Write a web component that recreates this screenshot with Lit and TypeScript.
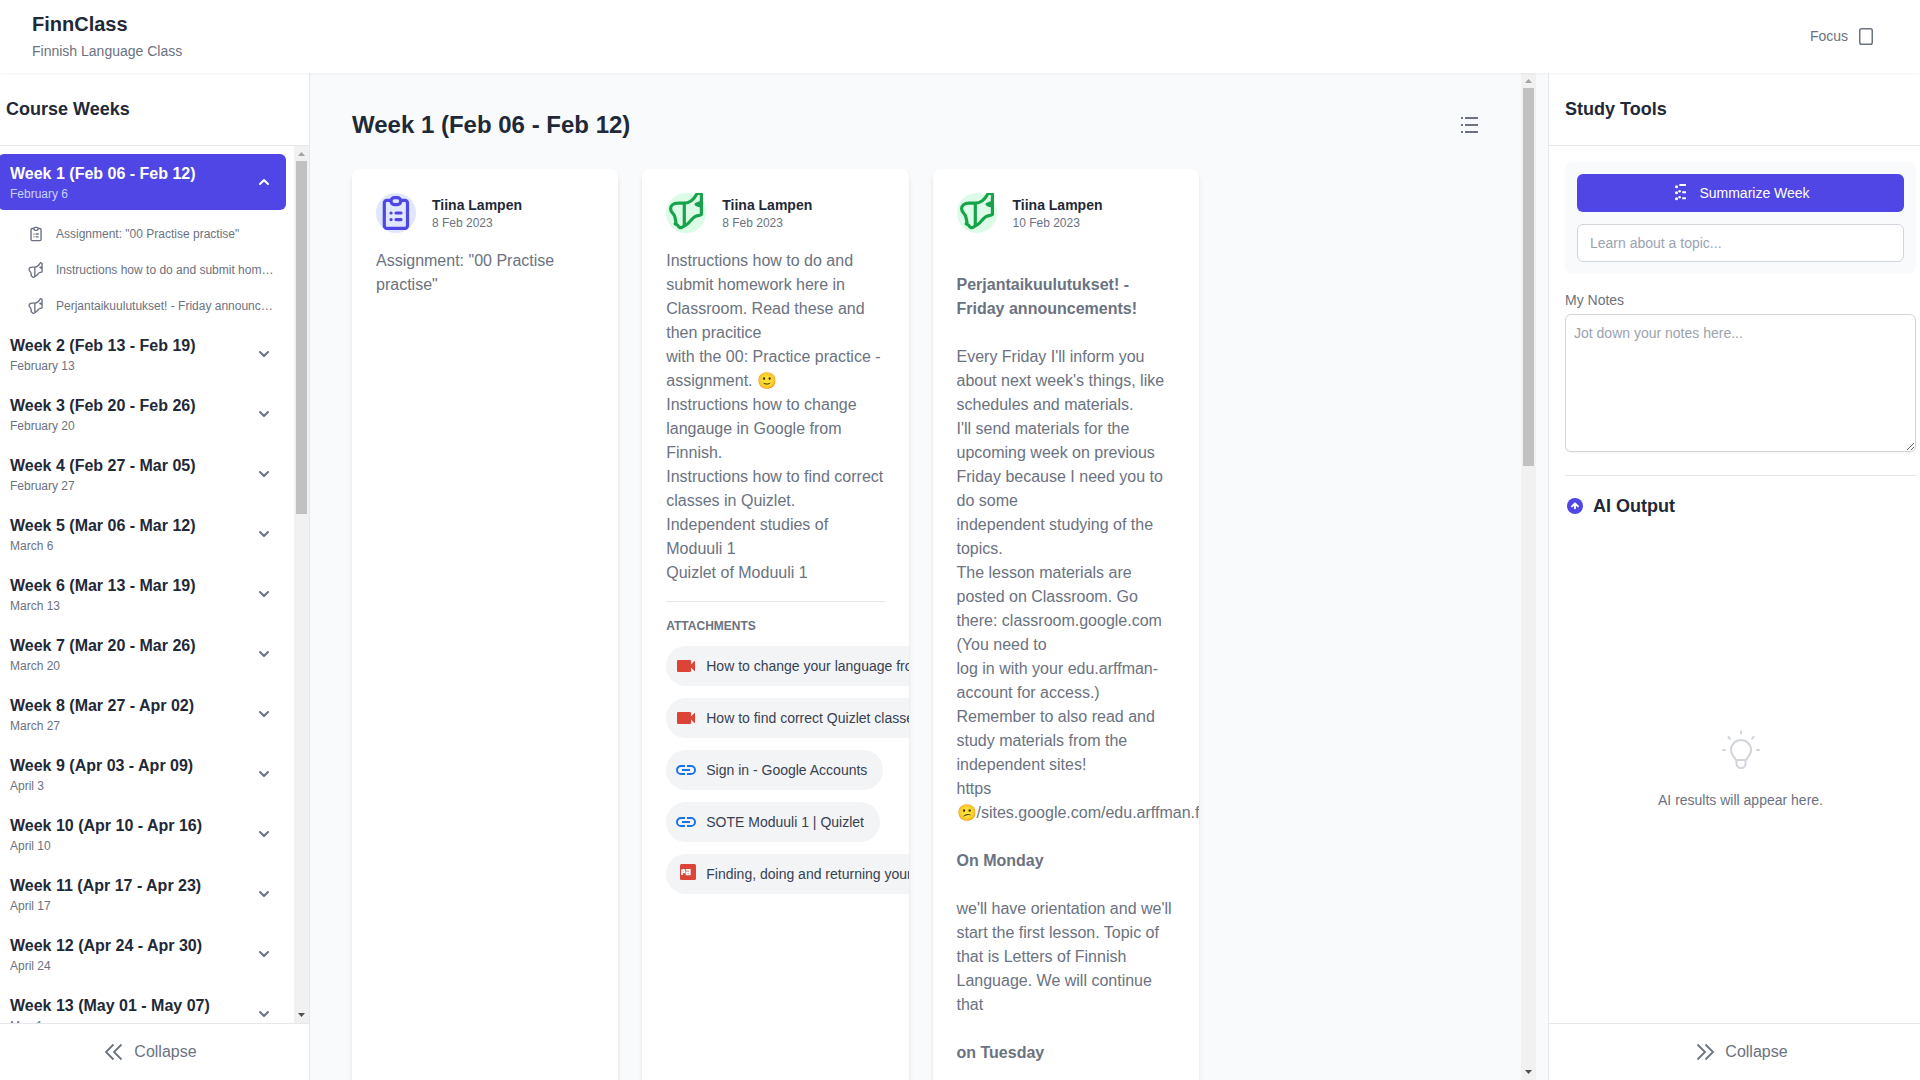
import { LitElement, html, css, svg, nothing } from "lit";
import { customElement, property, state } from "lit/decorators.js";

type IconName =
  | "clipboard" | "megaphone" | "chevron-up" | "chevron-down" | "double-left" | "double-right"
  | "list" | "panel" | "summary" | "spark" | "bulb" | "video" | "link" | "slides"
  | "clipboard-badge" | "megaphone-badge";

const clipboard = svg`
  <g fill="none" stroke="currentColor" stroke-width="3.200" stroke-linecap="round" stroke-linejoin="round">
    <rect x="8.300" y="7.300" width="23.200" height="28" rx="2.600"/>
    <rect x="15" y="4.600" width="9.800" height="7" rx="3.500" fill="var(--badge, #fff)"/>
    <path d="M15 20h.1M20 20h5M15 26.600h.1M20 26.600h5"/>
  </g>`;

const megaphone = svg`
  <path fill="none" stroke="currentColor" stroke-width="3.200" stroke-linecap="round" stroke-linejoin="round"
    d="M18.300 10.200H12C7.400 10.200 4.600 12.600 4.600 15.800C4.600 19 7.200 20.400 8.300 22.400C9.400 24.600 9.300 27 10 29.200L9.200 30.800L11.600 32.200C12.600 34.400 14.600 35.400 16.600 34C18.600 32.600 20.600 32 22.500 30C25.500 26.800 27.500 23.800 30.500 23C32.500 22.500 34.500 22.300 35.400 21.400V1.200L31.600 -.2C30 2.600 28 6 25 8C23 9.400 20.800 10.200 18.300 10.200ZM18.300 10.200V32M35 9.600C33.600 9.800 32 10.600 30.200 11.200C31.600 12.400 33.400 12.700 35 13"/>`;

const ICONS: Record<IconName, { box: string; body: unknown }> = {
  "clipboard-badge": { box: "0 0 40 40", body: clipboard },
  "megaphone-badge": { box: "0 0 40 40", body: megaphone },
  clipboard: { box: "1.300 1.500 37 37", body: clipboard },
  megaphone: { box: "2 -1.800 38 38", body: megaphone },
  "chevron-up": { box: "0 0 20 20", body: svg`<path d="M6 12l4-4 4 4" fill="none" stroke="currentColor" stroke-width="2" stroke-linecap="round" stroke-linejoin="round"/>` },
  "chevron-down": { box: "0 0 20 20", body: svg`<path d="M6 8l4 4 4-4" fill="none" stroke="currentColor" stroke-width="2" stroke-linecap="round" stroke-linejoin="round"/>` },
  "double-left": { box: "0 0 24 24", body: svg`<path d="M11.500 4.500L4 12l7.500 7.500M19.500 4.500L12 12l7.500 7.500" fill="none" stroke="currentColor" stroke-width="1.800"/>` },
  "double-right": { box: "0 0 24 24", body: svg`<path d="M4.500 4.500L12 12l-7.500 7.500M12.500 4.500L20 12l-7.500 7.500" fill="none" stroke="currentColor" stroke-width="1.800"/>` },
  list: { box: "0 0 24 24", body: svg`<path d="M8 4h13v2H8zM8 11h13v2H8zM8 18h13v2H8zM4 4h2v2H4zM4 11h2v2H4zM4 18h2v2H4z" fill="currentColor"/>` },
  panel: { box: "0 0 24 24", body: svg`<rect x="5.750" y="4.750" width="12.500" height="15.500" rx="1.800" fill="none" stroke="currentColor" stroke-width="1.500"/>` },
  summary: { box: "-1 0 20 20", body: svg`<g fill="currentColor"><circle cx="4.500" cy="3.700" r="1.500"/><circle cx="4.500" cy="9.700" r="1.500"/><circle cx="4.500" cy="15.700" r="1.500"/><circle cx="7.600" cy="8.300" r="1.300"/><circle cx="7.600" cy="14.300" r="1.300"/><path d="M7 1.600L8.300 1H14v2H8.300L7 2.400zM10.200 8.200H14v2h-3.800zM10.200 14.200H14v2h-3.800z"/></g>` },
  spark: { box: "0 0 20 20", body: svg`<circle cx="10" cy="10" r="8" fill="currentColor"/><path d="M7 10.300l3-3 3 3M10 8v4.200" fill="none" stroke="#fff" stroke-width="1.900" stroke-linecap="round" stroke-linejoin="round"/>` },
  bulb: { box: "0 -1 48 48", body: svg`<g fill="none" stroke="currentColor" stroke-width="2" stroke-linecap="round" stroke-linejoin="round"><path d="M19 33c-2-3-5-5.500-5-10a10 10 0 0 1 20 0c0 4.500-3 7-5 10zM19.500 33v3.500a4.500 4.500 0 0 0 9 0V33"/><path d="M24 4.500v2M11.500 10l1.500 1.800M36.500 10L35 11.800M6 23h2M40 23h2"/></g>` },
  video: { box: "0 0 24 24", body: svg`<path d="M17 10.500V7a1 1 0 0 0-1-1H4a1 1 0 0 0-1 1v10a1 1 0 0 0 1 1h12a1 1 0 0 0 1-1v-3.500l4 4v-11z" fill="#db4437"/>` },
  link: { box: "0 0 24 24", body: svg`<path d="M3.900 12c0-1.710 1.390-3.100 3.100-3.100h4V7H7a5 5 0 0 0 0 10h4v-1.900H7A3.100 3.100 0 0 1 3.900 12zM8 13h8v-2H8zm9-6h-4v1.900h4a3.100 3.100 0 0 1 0 6.200h-4V17h4a5 5 0 0 0 0-10z" fill="#1a73e8"/>` },
  slides: { box: "0 0 24 24", body: svg`<rect x="6" y="2" width="16" height="16" rx="1.500" fill="#db4437"/><path d="M8 13V8h2.400v2.300H8.600M12 7.800h3.800v4.700h-3.200v-2.200h3" fill="none" stroke="#fff" stroke-width="1.700"/>` },
};

@customElement("ui-icon")
class UiIcon extends LitElement {
  static styles = css`
    :host { display: inline-flex; flex: none; width: 24px; height: 24px; }
    svg { width: 100%; height: 100%; display: block; }
  `;
  @property() name: IconName = "list";
  render() {
    const icon = ICONS[this.name];
    return html`<svg viewBox=${icon.box} aria-hidden="true">${icon.body}</svg>`;
  }
}

/* A vertical scroll area with its own always visible bar. */
@customElement("scroll-area")
class ScrollArea extends LitElement {
  static styles = css`
    :host { display: flex; min-height: 0; }
    .view { flex: 1; min-width: 0; overflow-y: auto; scrollbar-width: none; }
    .bar { flex: none; width: 15px; display: flex; flex-direction: column; background: #f1f1f1; }
    .arrow { flex: none; width: 15px; height: 15px; color: #505050; }
    .off { color: #a3a3a3; }
    .track { flex: 1; min-height: 0; display: flex; flex-direction: column; padding: 0 2px; }
    .thumb { background: #c1c1c1; }
  `;
  @state() private before = 0;
  @state() private shown = 1;
  @state() private after = 0;
  private observer = new ResizeObserver(() => this.measure());

  firstUpdated() {
    const view = this.renderRoot.querySelector(".view") as HTMLElement;
    this.observer.observe(view);
    this.observer.observe(view.firstElementChild as HTMLElement);
  }
  disconnectedCallback() {
    super.disconnectedCallback();
    this.observer.disconnect();
  }
  private measure() {
    const view = this.renderRoot.querySelector(".view") as HTMLElement;
    this.before = view.scrollTop;
    this.shown = view.clientHeight;
    this.after = view.scrollHeight - view.clientHeight - view.scrollTop;
  }
  render() {
    return html`
      <div class="view" @scroll=${this.measure}><div><slot></slot></div></div>
      <div class="bar" aria-hidden="true">
        <svg class="arrow ${this.before > 0 ? "" : "off"}" viewBox="0 0 15 15"><path d="M4 10l3.500-4L11 10z" fill="currentColor"/></svg>
        <div class="track">
          <div style="flex: ${this.before} 0 0px"></div>
          <div class="thumb" style="flex: ${this.shown} 0 0px"></div>
          <div style="flex: ${this.after} 0 0px"></div>
        </div>
        <svg class="arrow ${this.after > 0 ? "" : "off"}" viewBox="0 0 15 15"><path d="M4 5l3.500 4L11 5z" fill="currentColor"/></svg>
      </div>
    `;
  }
}

interface Post {
  kind: "clipboard" | "megaphone";
  title: string;
  date: string;
  body: unknown;
  attachments?: { icon: IconName; label: string }[];
}

const POSTS: Post[] = [
  {
    kind: "clipboard",
    title: 'Assignment: "00 Practise practise"',
    date: "8 Feb 2023",
    body: html`Assignment: "00 Practise practise"`,
  },
  {
    kind: "megaphone",
    title: "Instructions how to do and submit homework here in Classroom.",
    date: "8 Feb 2023",
    body: html`Instructions how to do and submit homework here in Classroom. Read these and then pracitice<br />with the 00: Practice practice -assignment. 🙂<br />Instructions how to change langauge in Google from Finnish.<br />Instructions how to find correct classes in Quizlet.<br />Independent studies of Moduuli 1<br />Quizlet of Moduuli 1`,
    attachments: [
      { icon: "video", label: "How to change your language from Finnish" },
      { icon: "video", label: "How to find correct Quizlet classes" },
      { icon: "link", label: "Sign in - Google Accounts" },
      { icon: "link", label: "SOTE Moduuli 1 | Quizlet" },
      { icon: "slides", label: "Finding, doing and returning your homework" },
    ],
  },
  {
    kind: "megaphone",
    title: "Perjantaikuulutukset! - Friday announcements!",
    date: "10 Feb 2023",
    body: html`<br /><b>Perjantaikuulutukset! - Friday announcements!</b><br /><br />Every Friday I'll inform you about next week's things, like schedules and materials.<br />I'll send materials for the upcoming week on previous Friday because I need you to do some<br />independent studying of the topics.<br />The lesson materials are posted on Classroom. Go there: classroom.google.com (You need to<br />log in with your edu.arffman-account for access.)<br />Remember to also read and study materials from the independent sites!<br />https<br />😕/sites.google.com/edu.arffman.fi<br /><br /><b>On Monday</b><br /><br />we'll have orientation and we'll start the first lesson. Topic of that is Letters of Finnish Language. We will continue that<br /><br /><b>on Tuesday</b>`,
  },
];

const WEEK_COUNT = 33;
const DAY = 86400000;
const FIRST_MONDAY = Date.UTC(2023, 1, 6);

const format = (time: number, options: Intl.DateTimeFormatOptions) =>
  new Date(time).toLocaleDateString("en-US", { ...options, timeZone: "UTC" });

const WEEKS = Array.from({ length: WEEK_COUNT }, (_, i) => {
  const start = FIRST_MONDAY + i * 7 * DAY;
  const short: Intl.DateTimeFormatOptions = { month: "short", day: "2-digit" };
  return {
    title: `Week ${i + 1} (${format(start, short)} - ${format(start + 6 * DAY, short)})`,
    date: format(start, { month: "long", day: "numeric" }),
  };
});

const shared = css`
  *, *::before, *::after { box-sizing: border-box; }
  :host { box-sizing: border-box; color: #1f2937; font-family: "Liberation Sans", Arial, sans-serif; }
  h1, h2, h3, p, ul { margin: 0; padding: 0; }
  ul { list-style: none; }
  button, input, textarea { font: inherit; color: inherit; }
  button { border: 0; background: none; cursor: pointer; }
  .panel-title {
    flex: none;
    padding: 22px 16px;
    border-bottom: 1px solid #e5e7eb;
    font-size: 18px;
    line-height: 28px;
    font-weight: 700;
  }
  .collapse {
    flex: none;
    display: flex;
    align-items: center;
    justify-content: center;
    gap: 8px;
    width: 100%;
    padding: 16px;
    border-top: 1px solid #e5e7eb;
    color: #6b7280;
    font-size: 16px;
    line-height: 24px;
  }
`;

@customElement("week-sidebar")
class WeekSidebar extends LitElement {
  static styles = [shared, css`
    :host { display: flex; flex-direction: column; min-height: 0; background: #fff; border-right: 1px solid #e5e7eb; }
    .scroll { flex: 1; }
    .weeks { padding: 8px; display: flex; flex-direction: column; gap: 4px; }
    .week {
      width: 100%;
      height: 56px;
      padding: 8px 12px;
      display: flex;
      align-items: center;
      justify-content: space-between;
      border-radius: 6px;
      text-align: left;
    }
    .name { display: block; font-size: 16px; line-height: 24px; font-weight: 700; }
    .date { display: block; font-size: 12px; line-height: 16px; color: #6b7280; }
    .chevron { width: 20px; height: 20px; color: #6b7280; }
    .open { background: #4f46e5; color: #fff; }
    .open .date { color: #c7d2fe; }
    .open .chevron { color: #fff; }
    .posts { padding: 8px 0 0 18px; display: flex; flex-direction: column; gap: 4px; }
    .post {
      display: flex;
      align-items: center;
      gap: 12px;
      padding: 8px 12px;
      color: #6b7280;
      font-size: 12px;
      line-height: 16px;
      text-decoration: none;
    }
    .post-icon { width: 16px; height: 16px; }
    .label { overflow: hidden; text-overflow: ellipsis; white-space: nowrap; }
  `];
  @state() private open = 0;
  render() {
    return html`
      <h2 class="panel-title">Course Weeks</h2>
      <scroll-area class="scroll">
        <ul class="weeks">
          ${WEEKS.map((week, i) => html`
            <li>
              <button class="week ${i === this.open ? "open" : ""}" aria-expanded=${i === this.open} @click=${() => (this.open = i)}>
                <span><span class="name">${week.title}</span><span class="date">${week.date}</span></span>
                <ui-icon class="chevron" name=${i === this.open ? "chevron-up" : "chevron-down"}></ui-icon>
              </button>
              ${i === 0 && this.open === 0
                ? html`<ul class="posts">${POSTS.map((post) => html`
                    <li><a class="post" href="#"><ui-icon class="post-icon" name=${post.kind}></ui-icon><span class="label">${post.title}</span></a></li>`)}</ul>`
                : nothing}
            </li>`)}
        </ul>
      </scroll-area>
      <button class="collapse"><ui-icon name="double-left"></ui-icon>Collapse</button>
    `;
  }
}

@customElement("post-card")
class PostCard extends LitElement {
  static styles = [shared, css`
    :host {
      display: block;
      min-width: 0;
      padding: 24px;
      overflow: hidden;
      background: #fff;
      border-radius: 8px;
      box-shadow: 0 4px 6px -1px rgb(0 0 0 / 0.1), 0 2px 4px -2px rgb(0 0 0 / 0.1);
    }
    .head { display: flex; align-items: center; gap: 16px; margin-bottom: 16px; }
    .badge { width: 40px; height: 40px; border-radius: 50%; }
    .clipboard { --badge: #e0e7ff; background: #e0e7ff; color: #4f46e5; }
    .megaphone { background: #dcfce7; color: #16a34a; }
    .author { font-size: 14px; line-height: 20px; font-weight: 700; }
    .date { font-size: 12px; line-height: 16px; color: #6b7280; }
    .body { font-size: 16px; line-height: 24px; color: #6b7280; }
    .attachments { margin-top: 16px; padding-top: 16px; border-top: 1px solid #e5e7eb; }
    .caption { font-size: 12px; line-height: 16px; font-weight: 700; color: #6b7280; text-transform: uppercase; }
    .chips { margin-top: 12px; display: flex; flex-direction: column; align-items: flex-start; gap: 12px; }
    .chip {
      display: flex;
      align-items: center;
      gap: 8px;
      padding: 8px 16px 8px 8px;
      border-radius: 20px;
      background: #f3f4f6;
      color: #374151;
      font-size: 14px;
      line-height: 20px;
      white-space: nowrap;
      text-decoration: none;
    }
  `];
  @property({ attribute: false }) post!: Post;
  render() {
    const { kind, date, body, attachments } = this.post;
    return html`
      <div class="head">
        <ui-icon class="badge ${kind}" name=${`${kind}-badge`}></ui-icon>
        <div>
          <h3 class="author">Tiina Lampen</h3>
          <p class="date">${date}</p>
        </div>
      </div>
      <div class="body">${body}</div>
      ${attachments
        ? html`<div class="attachments">
            <h3 class="caption">Attachments</h3>
            <ul class="chips">${attachments.map((item) => html`
              <li><a class="chip" href="#"><ui-icon name=${item.icon}></ui-icon>${item.label}</a></li>`)}</ul>
          </div>`
        : nothing}
    `;
  }
}

@customElement("study-tools")
class StudyTools extends LitElement {
  static styles = [shared, css`
    :host { display: flex; flex-direction: column; min-height: 0; background: #fff; border-left: 1px solid #e5e7eb; }
    .content { flex: 1; min-height: 0; padding: 16px; display: flex; flex-direction: column; }
    .prompt { padding: 12px; display: flex; flex-direction: column; gap: 12px; border-radius: 8px; background: #f9fafb; }
    .summarize {
      display: flex;
      align-items: center;
      justify-content: center;
      gap: 8px;
      height: 38px;
      border-radius: 6px;
      background: #4f46e5;
      color: #fff;
      font-size: 14px;
      line-height: 20px;
    }
    .summary-icon { width: 20px; height: 20px; }
    .topic, .notes { width: 100%; border: 1px solid #d1d5db; border-radius: 6px; background: #fff; font-size: 14px; line-height: 20px; }
    .topic { height: 38px; padding: 8px 12px; }
    .notes { display: block; height: 138px; margin-top: 4px; padding: 8px; resize: vertical; box-shadow: 0 1px 2px rgb(0 0 0 / 0.05); }
    ::placeholder { color: #9ca3af; opacity: 1; }
    .notes-label { margin-top: 16px; color: #6b7280; font-size: 14px; line-height: 20px; }
    .output { flex: 1; min-height: 0; margin-top: 23px; padding-top: 16px; border-top: 1px solid #e5e7eb; display: flex; flex-direction: column; }
    .output-title { display: flex; align-items: center; gap: 8px; font-size: 18px; line-height: 28px; font-weight: 700; }
    .spark { width: 20px; height: 20px; color: #4f46e5; }
    .empty { flex: 1; padding-top: 8px; display: flex; flex-direction: column; align-items: center; justify-content: center; gap: 16px; color: #6b7280; font-size: 14px; line-height: 20px; }
    .bulb { width: 48px; height: 48px; color: #d1d5db; }
  `];
  render() {
    return html`
      <h2 class="panel-title">Study Tools</h2>
      <div class="content">
        <div class="prompt">
          <button class="summarize"><ui-icon class="summary-icon" name="summary"></ui-icon>Summarize Week</button>
          <input class="topic" type="text" aria-label="Learn about a topic" placeholder="Learn about a topic..." />
        </div>
        <label class="notes-label" for="notes">My Notes</label>
        <textarea class="notes" id="notes" placeholder="Jot down your notes here..."></textarea>
        <section class="output">
          <h2 class="output-title"><ui-icon class="spark" name="spark"></ui-icon>AI Output</h2>
          <div class="empty"><ui-icon class="bulb" name="bulb"></ui-icon><p>AI results will appear here.</p></div>
        </section>
      </div>
      <button class="collapse"><ui-icon name="double-right"></ui-icon>Collapse</button>
    `;
  }
}

@customElement("app-root")
class AppRoot extends LitElement {
  static styles = [shared, css`
    :host { display: flex; flex-direction: column; height: 100vh; overflow: hidden; background: #f8fafc; }
    .top {
      flex: none;
      z-index: 1;
      padding: 10px 32px 12px;
      display: flex;
      align-items: center;
      justify-content: space-between;
      background: #fff;
      box-shadow: 0 1px 2px rgb(0 0 0 / 0.05);
    }
    .brand { font-size: 20px; line-height: 28px; font-weight: 700; }
    .tagline { margin-top: 3px; font-size: 14px; line-height: 20px; color: #6b7280; }
    .focus { display: flex; align-items: center; gap: 6px; padding: 8px 10px; color: #6b7280; font-size: 14px; line-height: 20px; }
    .workspace { flex: 1; min-height: 0; display: flex; }
    .weeks { flex: none; width: 320px; margin-left: -10px; }
    .tools { flex: none; width: 384px; margin-right: -12px; }
    .main { flex: 1; min-width: 0; display: flex; margin: 0 12px 0 10px; }
    .scroll { flex: 1; min-width: 0; }
    .stream { padding: 32px; }
    .stream-head { display: flex; align-items: center; justify-content: space-between; margin-bottom: 24px; }
    .stream-title { font-size: 24px; line-height: 32px; font-weight: 700; }
    .view { display: flex; padding: 8px; color: #6b7280; }
    .cards { display: grid; grid-template-columns: repeat(4, minmax(0, 1fr)); gap: 24px; min-height: 2475px; }
  `];
  render() {
    return html`
      <header class="top">
        <div>
          <h1 class="brand">FinnClass</h1>
          <p class="tagline">Finnish Language Class</p>
        </div>
        <button class="focus">Focus<ui-icon name="panel"></ui-icon></button>
      </header>
      <div class="workspace">
        <week-sidebar class="weeks"></week-sidebar>
        <main class="main">
          <scroll-area class="scroll">
            <div class="stream">
              <div class="stream-head">
                <h2 class="stream-title">${WEEKS[0].title}</h2>
                <button class="view" aria-label="List view"><ui-icon name="list"></ui-icon></button>
              </div>
              <div class="cards">${POSTS.map((post) => html`<post-card .post=${post}></post-card>`)}</div>
            </div>
          </scroll-area>
        </main>
        <study-tools class="tools"></study-tools>
      </div>
    `;
  }
}
